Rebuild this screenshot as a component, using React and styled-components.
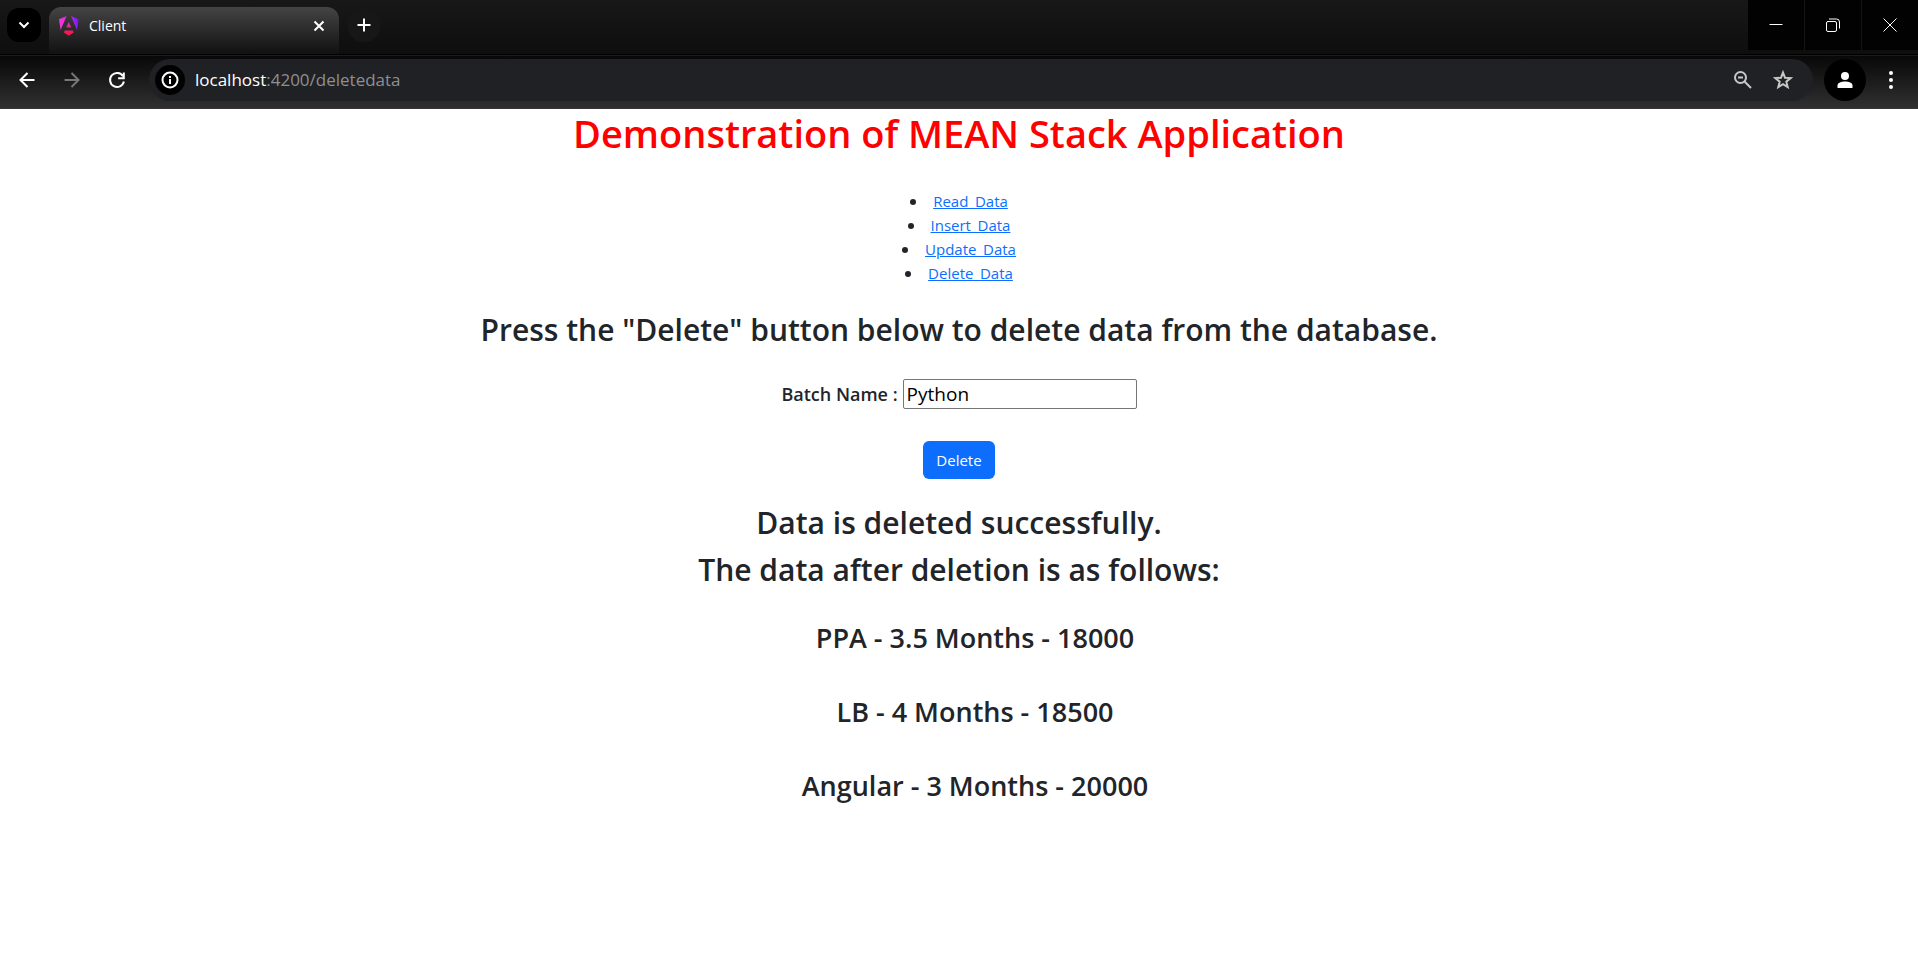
import React from "react";
import styled, { createGlobalStyle } from "styled-components";

const Global = createGlobalStyle`
  *, *::before, *::after { box-sizing: border-box; }
  body { margin: 0; background: #fff; color: #212529; font: 400 16px/24px "Open Sans", sans-serif; }
  button, input { font-family: inherit; }
`;

const Browser = styled.header`
  color: #fff;
  background: #000;
`;
const TabStrip = styled.div`
  display: flex;
  height: 55px;
  padding-left: 7px;
  background: linear-gradient(#181818, #0e0e0e);
  border-bottom: 1px solid #000;
`;
const IconButton = styled.button`
  display: grid;
  place-items: center;
  flex: none;
  width: ${(p) => p.$size || 34}px;
  height: ${(p) => p.$size || 34}px;
  padding: 0;
  border: 0;
  border-radius: ${(p) => p.$radius || "50%"};
  background: ${(p) => p.$fill || "transparent"};
  color: ${(p) => p.$color || "#fff"};
  svg { display: block; }
`;
const StripButton = styled(IconButton)`
  margin-top: 8px;
`;
const Tab = styled.div`
  display: flex;
  align-items: center;
  width: 290px;
  height: 47px;
  margin: 7px 8px 0 8px;
  padding: 0 11px 10px 10px;
  border-radius: 12px 12px 0 0;
  background: linear-gradient(#444, #111);
  font-size: 14px;
  line-height: 20px;
`;
const TabTitle = styled.span`
  flex: 1;
  margin-left: 10px;
`;
const WindowControls = styled.div`
  display: flex;
  gap: 1px;
  height: 50px;
  margin-left: auto;
  background: #151515;
`;
const WindowButton = styled.button`
  display: grid;
  place-items: center;
  width: 56px;
  padding: 0;
  border: 0;
  background: #020202;
  color: #fff;
`;
const Toolbar = styled.div`
  display: flex;
  align-items: center;
  height: 54px;
  padding: 0 10px 4px 10px;
  border-top: 1px solid #1c1c1c;
  border-bottom: 1px solid #3a3637;
  background: linear-gradient(#080808, #303030);
`;
const NavButtons = styled.div`
  display: flex;
  gap: 11px;
  margin-right: 15px;
`;
const AddressBar = styled.div`
  display: flex;
  align-items: center;
  flex: 1;
  height: 42px;
  margin-right: 11px;
  padding: 0 10px 0 6px;
  border-radius: 21px;
  background: #202124;
`;
const Address = styled.div`
  flex: 1;
  margin-left: 10px;
  font-size: 17px;
  line-height: 24px;
  color: #8d8f92;
`;
const Host = styled.span`
  color: #fff;
`;
const ProfileMenu = styled.div`
  display: flex;
  align-items: center;
  gap: 8px;
`;

const Page = styled.main`
  text-align: center;
`;
const Title = styled.h1`
  margin: 0 0 32px;
  font-size: 38px;
  font-weight: 600;
  line-height: 48px;
  color: #f00;
`;
const Menu = styled.ul`
  margin: 0;
  padding: 0;
  list-style-position: inside;
`;
const MenuLink = styled.a`
  color: #0d6efd;
  font-size: 15px;
  text-decoration: underline;
`;
const Heading = styled.h2`
  margin: ${(p) => p.$top || 0}px 0 8px;
  font-size: 30px;
  font-weight: 600;
  line-height: 39px;
`;
const Form = styled.form`
  display: flex;
  flex-direction: column;
  align-items: center;
  gap: 32px;
  margin: 30px 0 24px;
`;
const Field = styled.div`
  display: flex;
  align-items: center;
  gap: 5px;
`;
const Label = styled.label`
  font-size: 18px;
  font-weight: 600;
  line-height: 24px;
`;
const TextInput = styled.input`
  width: 234px;
  height: 30px;
  padding: 1px 3px;
  border: 1px solid #767676;
  border-radius: 2px;
  background: #fff;
  color: #000;
  font-size: 19px;
`;
const DeleteButton = styled.button`
  width: 72px;
  height: 38px;
  padding: 0;
  border: 0;
  border-radius: 6px;
  background: #0d6efd;
  color: #fff;
  font-size: 15px;
  line-height: 24px;
`;
const Results = styled.ul`
  margin: 32px 0 0;
  padding: 0 0 0 32px;
  list-style: none;
`;
const Result = styled.li`
  margin-bottom: 40px;
  font-size: 27px;
  font-weight: 600;
  line-height: 34px;
`;

const Stroke = ({ d, size = 18, width = 2, children }) => (
  <svg width={size} height={size} viewBox={`0 0 ${size} ${size}`} fill="none" stroke="currentColor" strokeWidth={width} aria-hidden="true">
    {d && <path d={d} />}
    {children}
  </svg>
);

const AngularLogo = () => (
  <svg width="20" height="20" viewBox="0 0 20 20" aria-hidden="true">
    <defs>
      <linearGradient id="ng" x1="0" y1="0.2" x2="1" y2="0.1">
        <stop offset="0" stopColor="#f637d5" />
        <stop offset="0.5" stopColor="#d42be8" />
        <stop offset="1" stopColor="#6a16fb" />
      </linearGradient>
      <linearGradient id="ngBase" x1="0" y1="0" x2="0" y2="1">
        <stop offset="0" stopColor="#e02bc0" />
        <stop offset="1" stopColor="#ff1237" />
      </linearGradient>
    </defs>
    <path fill="url(#ng)" d="M7.6 0 1.6 14.1 0 3.3zM19.6 3.3 18 14.1 12 0z" />
    <path fill="url(#ngBase)" d="M14.7 16.6 9.8 19.8l-4.9-3.2 1-2h7.8zM9.8 6l2.6 5.6H7.2z" />
  </svg>
);

const links = ["Read_Data", "Insert_Data", "Update_Data", "Delete_Data"];
const batches = ["PPA - 3.5 Months - 18000", "LB - 4 Months - 18500", "Angular - 3 Months - 20000"];

export default function App() {
  return (
    <>
      <Global />
      <Browser>
        <TabStrip>
          <StripButton $radius="12px" $fill="#000" aria-label="Search tabs">
            <Stroke d="M4.5 6.5 9 11l4.5-4.5" />
          </StripButton>
          <Tab>
            <AngularLogo />
            <TabTitle>Client</TabTitle>
            <IconButton $size={18} aria-label="Close tab">
              <Stroke d="m4.5 4.5 9 9m0-9-9 9" />
            </IconButton>
          </Tab>
          <StripButton $fill="#171717" aria-label="New tab">
            <Stroke d="M9 2.5v13M2.5 9h13" />
          </StripButton>
          <WindowControls>
            <WindowButton aria-label="Minimize"><Stroke width={1} d="M2.5 8.5h13" /></WindowButton>
            <WindowButton aria-label="Restore">
              <Stroke width={1}>
                <rect x="2.5" y="5.5" width="10" height="10" rx="1.5" />
                <path d="M5 3h7.5a3 3 0 0 1 3 3v6.5" />
              </Stroke>
            </WindowButton>
            <WindowButton aria-label="Close"><Stroke width={1} d="m2.5 2.5 13 13m0-13-13 13" /></WindowButton>
          </WindowControls>
        </TabStrip>
        <Toolbar>
          <NavButtons>
            <IconButton aria-label="Back"><Stroke d="M16.5 9H3M9.5 2 2.5 9l7 7" /></IconButton>
            <IconButton $color="#777" aria-label="Forward"><Stroke d="M1.5 9H15M8.5 2l7 7-7 7" /></IconButton>
            <IconButton aria-label="Reload">
              <Stroke d="M15 5.2A7 7 0 1 0 15.9 10.5M15.8 1.5v5.7h-5.7" />
            </IconButton>
          </NavButtons>
          <AddressBar>
            <IconButton $size={30} $fill="#000" aria-label="Site information">
              <Stroke>
                <circle cx="9" cy="9" r="7.5" />
                <path d="M9 8v5M9 5v2" />
              </Stroke>
            </IconButton>
            <Address><Host>localhost</Host>:4200/deletedata</Address>
            <IconButton $size={40} $color="#c7c7c7" aria-label="Zoom">
              <Stroke>
                <circle cx="6.5" cy="6.5" r="5.5" />
                <path d="M4 6.5h5m1.5 4 6.5 6.5" />
              </Stroke>
            </IconButton>
            <IconButton $size={40} $color="#c7c7c7" aria-label="Bookmark">
              <Stroke size={20} d="m10 2.5 2 5.2 5.6.4-4.3 3.6 1.4 5.4-4.7-3-4.7 3 1.4-5.4-4.3-3.6 5.6-.4z" />
            </IconButton>
          </AddressBar>
          <ProfileMenu>
            <IconButton $size={42} $fill="#000" aria-label="Profile">
              <svg width="18" height="18" viewBox="0 0 18 18" fill="currentColor" aria-hidden="true">
                <circle cx="9" cy="5" r="4" />
                <path d="M1.5 17v-2.5c0-3 4-4 7.5-4s7.5 1 7.5 4V17z" />
              </svg>
            </IconButton>
            <IconButton aria-label="More options">
              <svg width="18" height="18" viewBox="0 0 18 18" fill="currentColor" aria-hidden="true">
                <circle cx="9" cy="2" r="2" /><circle cx="9" cy="9" r="2" /><circle cx="9" cy="16" r="2" />
              </svg>
            </IconButton>
          </ProfileMenu>
        </Toolbar>
      </Browser>
      <Page>
        <Title>Demonstration of MEAN Stack Application</Title>
        <Menu>
          {links.map((text) => (
            <li key={text}><MenuLink href="#">{text}</MenuLink></li>
          ))}
        </Menu>
        <Heading $top={25}>Press the "Delete" button below to delete data from the database.</Heading>
        <Form onSubmit={(e) => e.preventDefault()}>
          <Field>
            <Label htmlFor="batch">Batch Name :</Label>
            <TextInput id="batch" defaultValue="Python" />
          </Field>
          <DeleteButton>Delete</DeleteButton>
        </Form>
        <Heading>Data is deleted successfully.</Heading>
        <Heading>The data after deletion is as follows:</Heading>
        <Results>
          {batches.map((text) => <Result key={text}>{text}</Result>)}
        </Results>
      </Page>
    </>
  );
}
